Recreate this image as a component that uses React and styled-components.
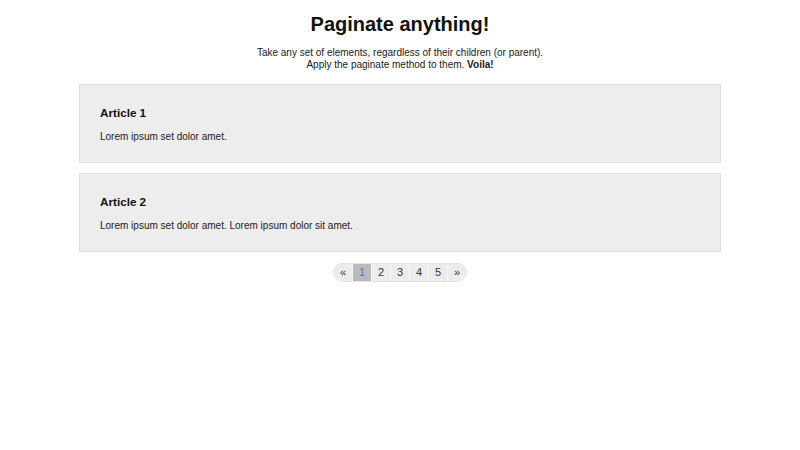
import React, { useState } from 'react';
import styled, { createGlobalStyle } from 'styled-components';

const GlobalStyle = createGlobalStyle`
  body {
    margin: 0;
    background: #fff;
    font-family: 'Liberation Sans', Arial, sans-serif;
    font-size: 10px;
    color: #111;
  }
`;

const Page = styled.div`
  padding-top: 12px;
  text-align: center;
`;

const Title = styled.h1`
  font-size: 20px;
  font-weight: bold;
  margin: 0 0 11px;
  line-height: 24px;
`;

const Intro = styled.p`
  font-size: 10px;
  line-height: 12px;
  margin: 0 0 13px;
  color: #1a1a1a;
`;

const Articles = styled.div`
  width: calc(80% + 2px);
  margin: 0 auto;
  display: flex;
  flex-direction: column;
  gap: 10px;
  text-align: left;
`;

const Article = styled.div`
  background: #ededed;
  border: 1px solid #e0e0e0;
  padding: 21px 20px 19px;
`;

const ArticleTitle = styled.h3`
  font-size: 11.7px;
  font-weight: bold;
  margin: 0 0 11px;
  line-height: 14px;
`;

const ArticleText = styled.p`
  font-size: 10px;
  margin: 0;
  line-height: 12px;
  color: #1a1a1a;
`;

const Pager = styled.ul`
  display: inline-flex;
  list-style: none;
  padding: 0;
  margin: 11px 0 0;
  border-radius: 10px;
  overflow: hidden;
  border: 1px solid #e0e0e0;
`;

const PageItem = styled.li`
  width: 18px;
  height: 17px;
  line-height: 17px;
  font-size: 11px;
  text-align: center;
  cursor: pointer;
  background: ${p => (p.$active ? '#bababa' : '#ececec')};
  color: ${p => (p.$active ? '#5978a8' : '#333')};
  border-left: 1px solid #f8f8f8;
  &:first-child {
    border-left: none;
  }
`;

const articles = [
  { title: 'Article 1', text: 'Lorem ipsum set dolor amet.' },
  { title: 'Article 2', text: 'Lorem ipsum set dolor amet. Lorem ipsum dolor sit amet.' },
];

export default function App() {
  const [page, setPage] = useState(1);
  return (
    <Page>
      <GlobalStyle />
      <Title>Paginate anything!</Title>
      <Intro>
        Take any set of elements, regardless of their children (or parent).
        <br />
        Apply the paginate method to them. <b>Voila!</b>
      </Intro>
      <Articles>
        {articles.map(a => (
          <Article key={a.title}>
            <ArticleTitle>{a.title}</ArticleTitle>
            <ArticleText>{a.text}</ArticleText>
          </Article>
        ))}
      </Articles>
      <Pager>
        <PageItem onClick={() => setPage(Math.max(1, page - 1))}>«</PageItem>
        {[1, 2, 3, 4, 5].map(n => (
          <PageItem key={n} $active={n === page} onClick={() => setPage(n)}>
            {n}
          </PageItem>
        ))}
        <PageItem onClick={() => setPage(Math.min(5, page + 1))}>»</PageItem>
      </Pager>
    </Page>
  );
}
